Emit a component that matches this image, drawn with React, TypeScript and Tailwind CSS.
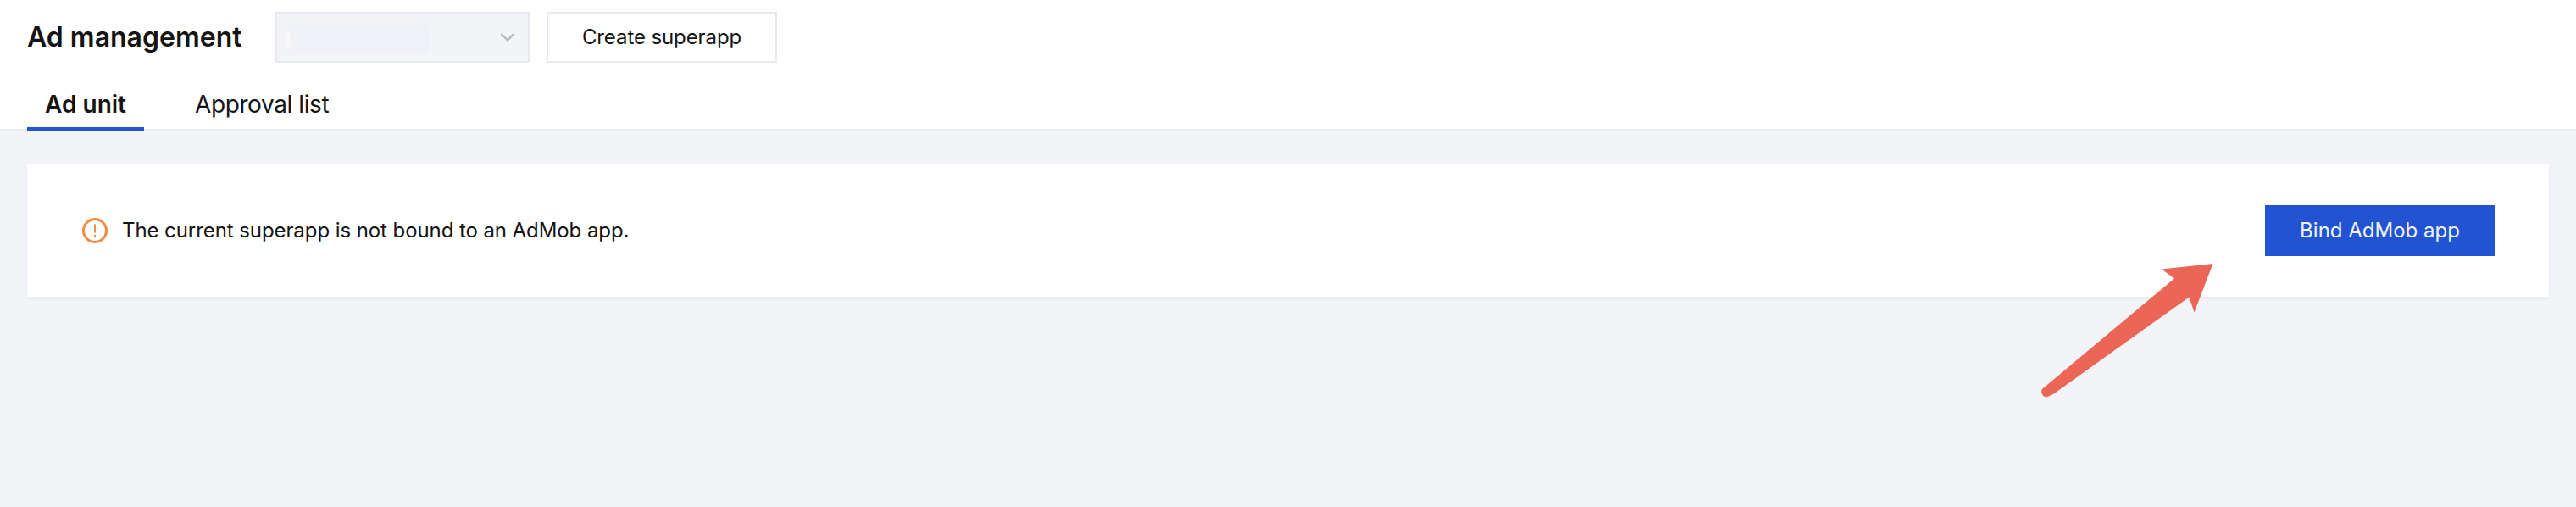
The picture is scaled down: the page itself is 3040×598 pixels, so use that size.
import { ChevronDown } from "lucide-react";

export default function App() {
  return (
    <div className="relative h-[598px] w-[3040px] overflow-hidden bg-[#f3f4f8] font-['Inter',sans-serif] text-[#141414]">
      {/* Header */}
      <header className="h-[154px] border-b-2 border-[#e9ebf1] bg-white">
        <div className="flex items-center pl-[32px] pt-[14px]">
          <h1 className="w-[293px] text-[32px] leading-[60px] font-semibold">Ad management</h1>
          <div className="relative flex h-[60px] w-[300px] items-center justify-end border-2 border-[#e8e9ef] bg-[#f3f4f8] pr-[10px]">
            {/* Blurred superapp name */}
            <div className="absolute top-[12px] left-[10px] h-[36px] w-[170px] rounded-[8px] bg-[#f0f1f6] blur-[1px]" />
            <div className="absolute top-[20px] left-[10px] h-[22px] w-[5px] rounded-full bg-[#fafafc] blur-[1px]" />
            <ChevronDown className="h-[28px] w-[28px] text-[#b4b6bc]" strokeWidth={2} />
          </div>
          <button className="ml-[20px] flex h-[60px] w-[272px] items-center justify-center border-2 border-[#e8e9ef] bg-white text-[24px] tracking-[-0.1px]">
            Create superapp
          </button>
        </div>
        <nav className="mt-[18px] ml-[32px] flex">
          <a className="flex h-[62px] w-[138px] items-center justify-center border-b-4 border-[#2253d1] pt-[4px] text-[28px] font-semibold">
            Ad unit
          </a>
          <a className="ml-[60px] flex h-[58px] items-center pt-[4px] text-[28px] tracking-[-0.4px]">Approval list</a>
        </nav>
      </header>

      {/* Notice card */}
      <main className="px-[32px] pt-[40px]">
        <section className="flex h-[156px] items-center justify-between bg-white pr-[64px] pl-[65px] shadow-[0_2px_6px_rgba(30,40,80,0.05)]">
          <div className="flex items-center gap-[17px]">
            <svg className="h-[30px] w-[30px]" viewBox="0 0 30 30" fill="none" stroke="#f58a42">
              <circle cx="15" cy="15" r="13.5" strokeWidth="3" />
              <path d="M15 7.5v10M15 20v2.5" strokeWidth="2" />
            </svg>
            <p className="text-[24px] tracking-[-0.08px]">The current superapp is not bound to an AdMob app.</p>
          </div>
          <button className="flex h-[60px] w-[271px] items-center justify-center bg-[#2253d1] text-[24px] text-[#eef2fd]">
            Bind AdMob app
          </button>
        </section>
      </main>

      {/* Annotation arrow */}
      <svg className="absolute top-0 left-0 h-[598px] w-[3040px]" viewBox="0 0 3040 598">
        <path
          d="M2611.5 311 L2551 317.5 L2566 328.5 L2410.5 458.5 Q2408 461 2410 465 Q2412 469 2416 468 L2423 465 L2583.5 350.5 L2589.5 368.5 Z"
          fill="#ec6657"
        />
      </svg>
    </div>
  );
}
